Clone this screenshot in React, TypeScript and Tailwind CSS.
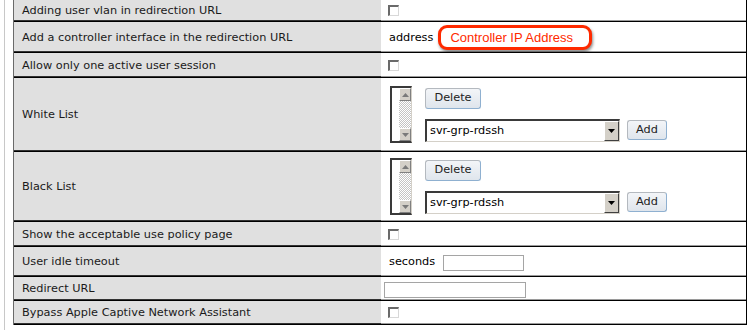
import React from "react";

const font = "font-['DejaVu_Sans',Verdana,sans-serif] text-[11.3px] leading-[14px]";

function Checkbox() {
  return (
    <div className="h-[11px] w-[11px] bg-white border-t-2 border-l-2 border-r border-b border-t-[#6a6a6a] border-l-[#6a6a6a] border-r-[#d8d8d8] border-b-[#d8d8d8]" />
  );
}

function ScrollBtn({ up }: { up?: boolean }) {
  return (
    <div className="flex h-[13px] w-[12px] items-center justify-center bg-[#d4d0c8] border-t border-l border-r border-b border-t-white border-l-white border-r-[#808080] border-b-[#808080]">
      <svg width="7" height="4" viewBox="0 0 7 4">
        {up ? (
          <polygon points="0,4 7,4 3.5,0" fill="#7a7a7a" />
        ) : (
          <polygon points="0,0 7,0 3.5,4" fill="#7a7a7a" />
        )}
      </svg>
    </div>
  );
}

function ListBox() {
  return (
    <div className="flex h-[57px] w-[22px] bg-white border-t-2 border-l-2 border-t-[#3a3a3a] border-l-[#3a3a3a] border-b-2 border-b-[#3a3a3a] border-r border-r-[#d4d0c8]">
      <div className="flex-1" />
      <div className="flex w-[12px] flex-col">
        <ScrollBtn up />
        <div className="flex-1 bg-[repeating-conic-gradient(#c4c4c4_0%_25%,#ffffff_0%_50%)] bg-[length:2px_2px]" />
        <ScrollBtn />
      </div>
    </div>
  );
}

function Btn({ label, w, h }: { label: string; w: string; h: string }) {
  return (
    <div
      className={`${w} ${h} flex items-center justify-center rounded-[3px] border border-t-[#b4b9bf] border-l-[#b4b9bf] border-r-[#8fb0d0] border-b-[#8fb0d0] bg-[linear-gradient(#f3f5f8,#dfe5ec)] text-[#222] ${font}`}
    >
      {label}
    </div>
  );
}

function Select() {
  return (
    <div className="flex h-[23px] w-[195px] bg-white border-t-2 border-l-2 border-t-[#3a3a3a] border-l-[#3a3a3a] border-r border-b border-r-[#d4d0c8] border-b-[#d4d0c8]">
      <div className={`flex flex-1 items-center pl-[3px] pt-[1px] text-black ${font}`}>svr-grp-rdssh</div>
      <div className="flex h-full w-[15px] items-center justify-center bg-[#d4d0c8] border-t border-l border-r border-b border-t-white border-l-white border-r-[#404040] border-b-[#404040]">
        <svg width="7" height="4" viewBox="0 0 7 4">
          <polygon points="0,0 7,0 3.5,4" fill="#000" />
        </svg>
      </div>
    </div>
  );
}

function ListCell() {
  return (
    <div className="flex items-center pl-[9px]">
      <ListBox />
      <div className="ml-[13px] flex flex-col gap-[10px]">
        <Btn label="Delete" w="w-[56px]" h="h-[21px]" />
        <div className="flex items-center gap-[7px]">
          <Select />
          <Btn label="Add" w="w-[40px]" h="h-[20px]" />
        </div>
      </div>
    </div>
  );
}

function Row({
  h,
  label,
  children,
}: {
  h: string;
  label: string;
  children?: React.ReactNode;
}) {
  return (
    <div className={`flex ${h} border-b border-black`}>
      <div
        className={`flex w-[367px] items-center border-b border-[#333] bg-[#e0e0e0] pl-[8px] pt-[2px] text-[#1a1a1a] ${font}`}
      >
        {label}
      </div>
      <div className={`flex flex-1 items-center border-b border-[#9a9a9a] bg-white pt-[1px] text-black ${font}`}>
        {children}
      </div>
    </div>
  );
}

export default function App() {
  return (
    <div className="h-[330px] w-[753px] overflow-hidden bg-white pl-[4px]">
      <div className="h-[330px] border-l border-[#c8c8c8] pl-[8px]">
        <div className="w-[734px] border-l border-r border-l-[#6a6a6a] border-r-black">
          <Row h="h-[22px]" label="Adding user vlan in redirection URL">
            <div className="pl-[7px]">
              <Checkbox />
            </div>
          </Row>
          <Row h="h-[31px]" label="Add a controller interface in the redirection URL">
            <div className="flex items-center pl-[8px]">
              <span className="pt-[1px]">address</span>
              <div className="ml-[5px] flex h-[25px] w-[154px] items-center rounded-[9px] border-[3px] border-[#ff2a00] bg-white pl-[9px] shadow-[1px_2px_3px_rgba(0,0,0,0.45)]">
                <span className="font-['Liberation_Sans',Arial,sans-serif] text-[13px] leading-[15px] text-[#ff2a00]">
                  Controller IP Address
                </span>
              </div>
            </div>
          </Row>
          <Row h="h-[25px]" label="Allow only one active user session">
            <div className="pl-[7px]">
              <Checkbox />
            </div>
          </Row>
          <Row h="h-[74px]" label="White List">
            <ListCell />
          </Row>
          <Row h="h-[70px]" label="Black List">
            <ListCell />
          </Row>
          <Row h="h-[25px]" label="Show the acceptable use policy page">
            <div className="pl-[7px]">
              <Checkbox />
            </div>
          </Row>
          <Row h="h-[30px]" label="User idle timeout">
            <div className="flex items-center pl-[8px]">
              <span className="pt-[1px]">seconds</span>
              <div className="ml-[8px] mt-[2px] h-[16px] w-[81px] border border-[#a5a5a5] bg-white" />
            </div>
          </Row>
          <Row h="h-[24px]" label="Redirect URL">
            <div className="pl-[3px]">
              <div className="mt-[2px] h-[16px] w-[142px] border border-[#a5a5a5] bg-white" />
            </div>
          </Row>
          <Row h="h-[24px]" label="Bypass Apple Captive Network Assistant">
            <div className="pl-[7px]">
              <Checkbox />
            </div>
          </Row>
        </div>
      </div>
    </div>
  );
}
